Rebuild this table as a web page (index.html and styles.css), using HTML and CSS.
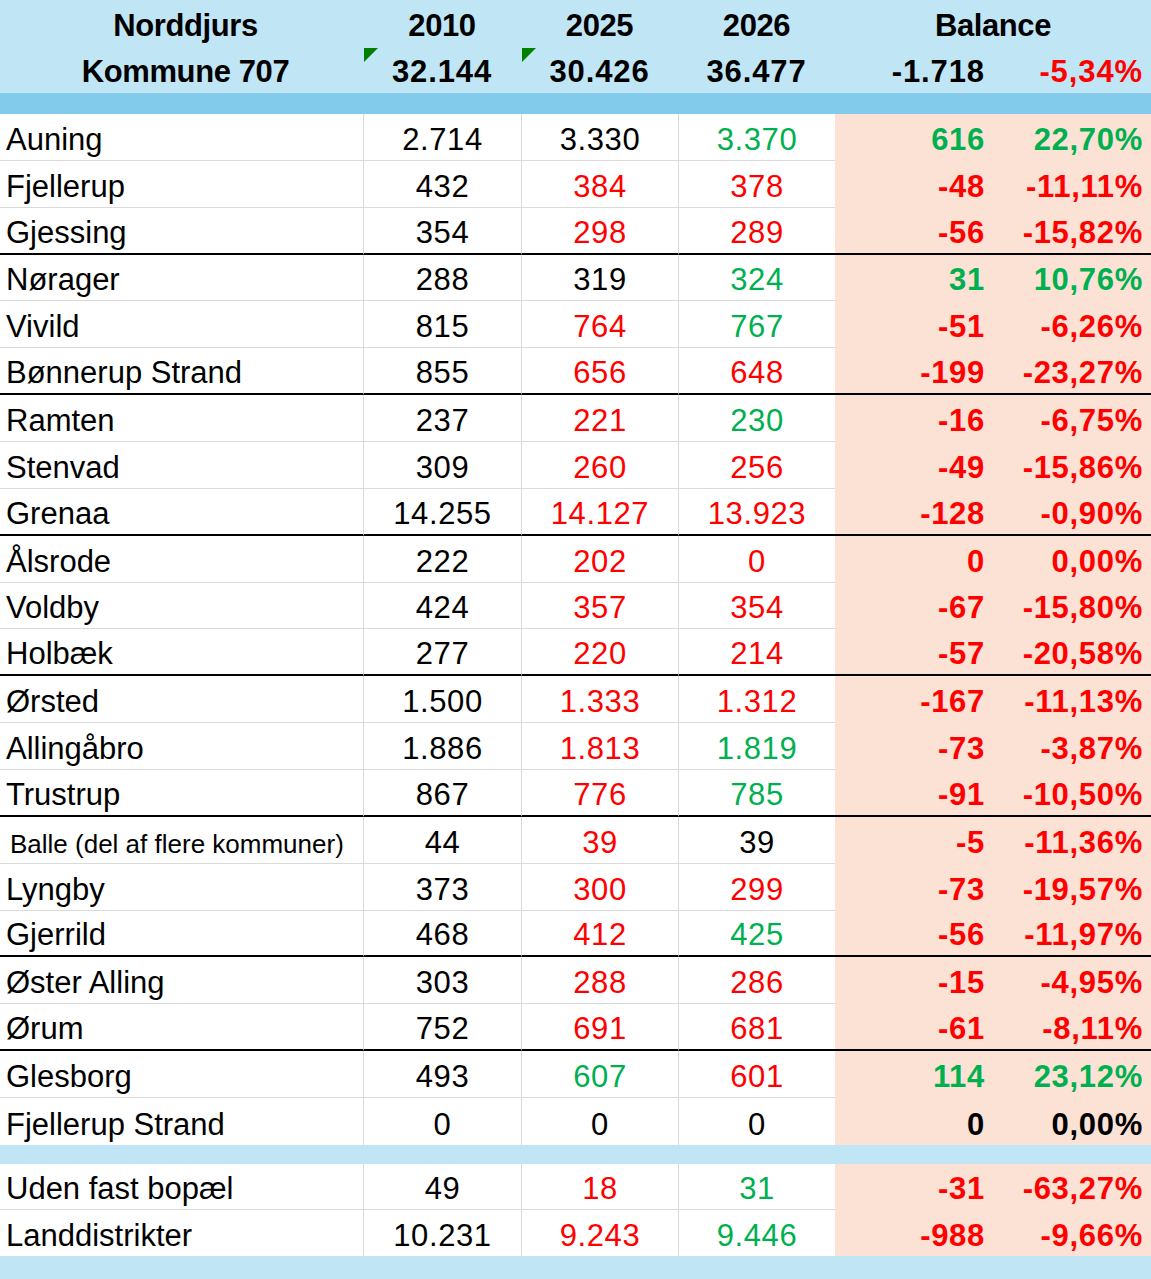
FILE: index.html
```html
<!DOCTYPE html>
<html lang="da">
<head>
<meta charset="utf-8">
<title>Norddjurs Kommune 707</title>
<link rel="stylesheet" href="styles.css">
</head>
<body>
<div class="sheet">
  <div class="hrow">
    <div class="h hname">Norddjurs</div>
    <div class="h">2010</div>
    <div class="h">2025</div>
    <div class="h">2026</div>
    <div class="h hbal">Balance</div>
  </div>
  <div class="hrow">
    <div class="h hname">Kommune 707</div>
    <div class="h num flag">32.144</div>
    <div class="h num flag">30.426</div>
    <div class="h num">36.477</div>
    <div class="h num hb1">-1.718</div>
    <div class="h num hb2 red">-5,34%</div>
  </div>
  <div class="band dark"></div>

  <div class="row"><div class="c name">Auning</div><div class="c y">2.714</div><div class="c y">3.330</div><div class="c y green">3.370</div><div class="c b1 green">616</div><div class="c b2 green">22,70%</div></div>
  <div class="row"><div class="c name">Fjellerup</div><div class="c y">432</div><div class="c y red">384</div><div class="c y red">378</div><div class="c b1 red">-48</div><div class="c b2 red">-11,11%</div></div>
  <div class="row thick"><div class="c name">Gjessing</div><div class="c y">354</div><div class="c y red">298</div><div class="c y red">289</div><div class="c b1 red">-56</div><div class="c b2 red">-15,82%</div></div>

  <div class="row"><div class="c name">Nørager</div><div class="c y">288</div><div class="c y">319</div><div class="c y green">324</div><div class="c b1 green">31</div><div class="c b2 green">10,76%</div></div>
  <div class="row"><div class="c name">Vivild</div><div class="c y">815</div><div class="c y red">764</div><div class="c y green">767</div><div class="c b1 red">-51</div><div class="c b2 red">-6,26%</div></div>
  <div class="row thick"><div class="c name">Bønnerup Strand</div><div class="c y">855</div><div class="c y red">656</div><div class="c y red">648</div><div class="c b1 red">-199</div><div class="c b2 red">-23,27%</div></div>

  <div class="row"><div class="c name">Ramten</div><div class="c y">237</div><div class="c y red">221</div><div class="c y green">230</div><div class="c b1 red">-16</div><div class="c b2 red">-6,75%</div></div>
  <div class="row"><div class="c name">Stenvad</div><div class="c y">309</div><div class="c y red">260</div><div class="c y red">256</div><div class="c b1 red">-49</div><div class="c b2 red">-15,86%</div></div>
  <div class="row thick"><div class="c name">Grenaa</div><div class="c y">14.255</div><div class="c y red">14.127</div><div class="c y red">13.923</div><div class="c b1 red">-128</div><div class="c b2 red">-0,90%</div></div>

  <div class="row"><div class="c name">Ålsrode</div><div class="c y">222</div><div class="c y red">202</div><div class="c y red">0</div><div class="c b1 red">0</div><div class="c b2 red">0,00%</div></div>
  <div class="row"><div class="c name">Voldby</div><div class="c y">424</div><div class="c y red">357</div><div class="c y red">354</div><div class="c b1 red">-67</div><div class="c b2 red">-15,80%</div></div>
  <div class="row thick"><div class="c name">Holbæk</div><div class="c y">277</div><div class="c y red">220</div><div class="c y red">214</div><div class="c b1 red">-57</div><div class="c b2 red">-20,58%</div></div>

  <div class="row"><div class="c name">Ørsted</div><div class="c y">1.500</div><div class="c y red">1.333</div><div class="c y red">1.312</div><div class="c b1 red">-167</div><div class="c b2 red">-11,13%</div></div>
  <div class="row"><div class="c name">Allingåbro</div><div class="c y">1.886</div><div class="c y red">1.813</div><div class="c y green">1.819</div><div class="c b1 red">-73</div><div class="c b2 red">-3,87%</div></div>
  <div class="row thick"><div class="c name">Trustrup</div><div class="c y">867</div><div class="c y red">776</div><div class="c y green">785</div><div class="c b1 red">-91</div><div class="c b2 red">-10,50%</div></div>

  <div class="row"><div class="c name small">Balle (del af flere kommuner)</div><div class="c y">44</div><div class="c y red">39</div><div class="c y">39</div><div class="c b1 red">-5</div><div class="c b2 red">-11,36%</div></div>
  <div class="row"><div class="c name">Lyngby</div><div class="c y">373</div><div class="c y red">300</div><div class="c y red">299</div><div class="c b1 red">-73</div><div class="c b2 red">-19,57%</div></div>
  <div class="row thick"><div class="c name">Gjerrild</div><div class="c y">468</div><div class="c y red">412</div><div class="c y green">425</div><div class="c b1 red">-56</div><div class="c b2 red">-11,97%</div></div>

  <div class="row"><div class="c name">Øster Alling</div><div class="c y">303</div><div class="c y red">288</div><div class="c y red">286</div><div class="c b1 red">-15</div><div class="c b2 red">-4,95%</div></div>
  <div class="row thick"><div class="c name">Ørum</div><div class="c y">752</div><div class="c y red">691</div><div class="c y red">681</div><div class="c b1 red">-61</div><div class="c b2 red">-8,11%</div></div>

  <div class="row"><div class="c name">Glesborg</div><div class="c y">493</div><div class="c y green">607</div><div class="c y red">601</div><div class="c b1 green">114</div><div class="c b2 green">23,12%</div></div>
  <div class="row last"><div class="c name">Fjellerup Strand</div><div class="c y">0</div><div class="c y">0</div><div class="c y">0</div><div class="c b1">0</div><div class="c b2">0,00%</div></div>

  <div class="band light mid"></div>

  <div class="row short"><div class="c name">Uden fast bopæl</div><div class="c y">49</div><div class="c y red">18</div><div class="c y green">31</div><div class="c b1 red">-31</div><div class="c b2 red">-63,27%</div></div>
  <div class="row short last"><div class="c name">Landdistrikter</div><div class="c y">10.231</div><div class="c y red">9.243</div><div class="c y green">9.446</div><div class="c b1 red">-988</div><div class="c b2 red">-9,66%</div></div>

  <div class="band light end"></div>
</div>
</body>
</html>
```

FILE: styles.css
```css
html, body {
  margin: 0;
  padding: 0;
  background: #ffffff;
}

body {
  width: 1151px;
  height: 1279px;
  overflow: hidden;
  font-family: "Liberation Sans", Arial, sans-serif;
  color: #000;
}

.sheet {
  display: flex;
  flex-direction: column;
  width: 1151px;
}

/* header */
.hrow {
  display: grid;
  grid-template-columns: 363px 158px 157px 157px 155px 161px;
  height: 46.5px;
  background: #c0e5f5;
}

.h {
  display: flex;
  align-items: flex-end;
  justify-content: center;
  padding-bottom: 3px;
  box-sizing: border-box;
  font-weight: bold;
  font-size: 31px;
  letter-spacing: -0.4px;
  position: relative;
}

.h.num {
  letter-spacing: 0.9px;
}

.hname {
  padding-left: 8px;
}

.hbal {
  grid-column: 5 / span 2;
}

.hb1 {
  justify-content: flex-end;
  padding-right: 5px;
}

.hb2 {
  justify-content: flex-end;
  padding-right: 8px;
}

.flag::before {
  content: "";
  position: absolute;
  left: 1px;
  top: 1px;
  width: 0;
  height: 0;
  border-top: 14px solid #007f00;
  border-right: 14px solid transparent;
}

.band {
  width: 100%;
}

.band.dark {
  height: 21px;
  background: #83cbeb;
}

.band.light {
  background: #c0e5f5;
}

.band.mid {
  height: 19px;
}

.band.end {
  height: 30px;
}

/* data rows */
.row {
  display: grid;
  grid-template-columns: 363px 158px 157px 157px 155px 161px;
  height: 46.87px;
  box-sizing: border-box;
}

.row.short {
  height: 46px;
}

.c {
  display: flex;
  align-items: flex-end;
  box-sizing: border-box;
  font-size: 31px;
  padding-bottom: 2px;
  white-space: nowrap;
  border-bottom: 1px solid #dadada;
}

.name {
  padding-left: 6px;
}

.name.small {
  font-size: 26px;
  padding-left: 10px;
  padding-bottom: 3px;
}

.y {
  justify-content: center;
  border-left: 1px solid #dadada;
  letter-spacing: 0.6px;
}

.b1, .b2 {
  justify-content: flex-end;
  background: #fbe2d5;
  border-bottom-color: #fbe2d5;
  font-weight: bold;
  letter-spacing: 0.7px;
}

.b1 {
  padding-right: 5px;
}

.b2 {
  padding-right: 8px;
}

.row.thick .c {
  border-bottom: 2px solid #000;
}

.row.last .c {
  border-bottom: none;
}

.red {
  color: #ff0000;
}

.green {
  color: #00b050;
}
```
